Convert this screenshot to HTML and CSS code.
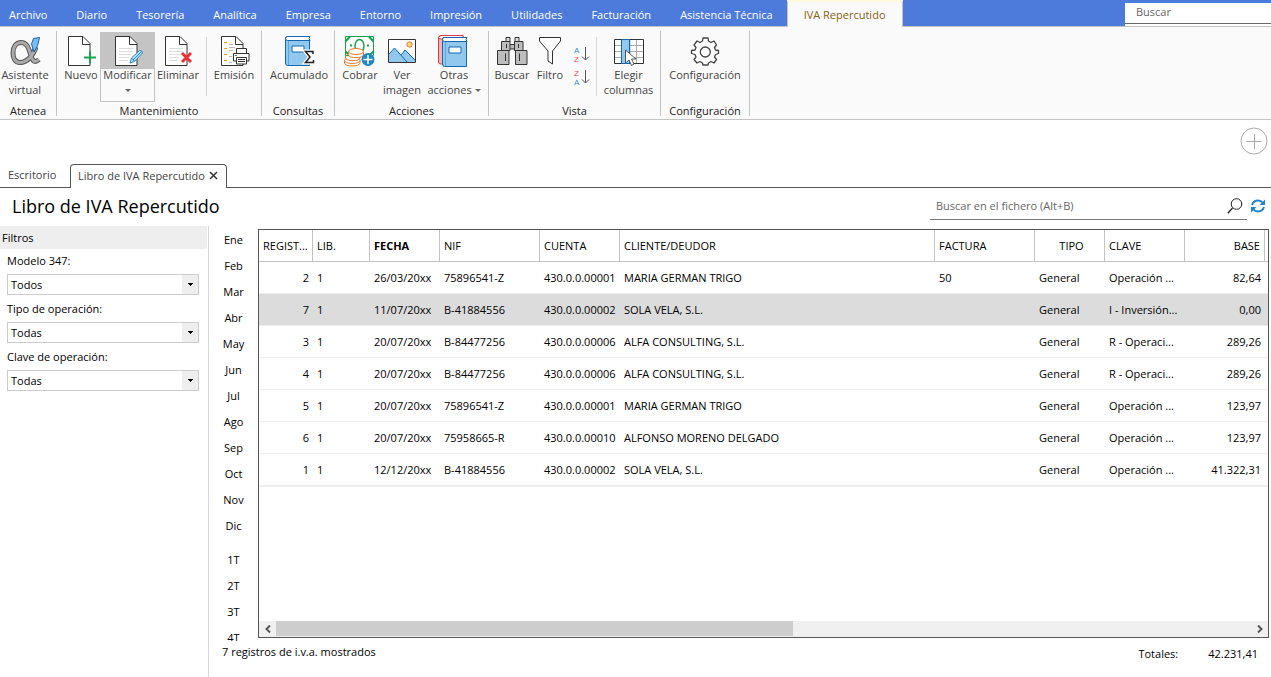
FILE: index.html
```html
<!DOCTYPE html>
<html lang="es">
<head>
<meta charset="utf-8">
<meta name="viewport" content="width=device-width, initial-scale=1">
<title>Libro de IVA Repercutido</title>
<link rel="stylesheet" href="styles.css">
</head>
<body>
<svg class="defs" aria-hidden="true">
  <symbol id="page" viewBox="0 0 32 32">
    <path d="M3.5.5H18L25 7.5V29.5H3.5Z" fill="#fff" stroke="#333"/>
    <path d="M17.5 1V8.500H25" fill="none" stroke="#333"/>
  </symbol>
  <symbol id="lines" viewBox="0 0 32 32">
    <path d="M7 12.500H21M7 15.500H21M7 18.500H19M7 21.500H17M7 24.500H16" stroke="#ddd"/>
  </symbol>
  <symbol id="book" viewBox="0 0 32 32">
    <path d="M2.500 2Q2.500.5 4.500.5H26.500L25.500 3L26.500 4.500V29.500H4.500Q2.500 29.500 2.500 27Z" fill="#92c8ee" stroke="#1268b3"/>
    <path d="M4.500.5H27L26 2.500L27 4.500H4.500Q2.500 4.500 2.500 2.500T4.500.5Z" fill="#fff" stroke="#1268b3"/>
    <path d="M5.500 5V29" stroke="#5da5dc"/>
    <path d="M9 10H21V16H9Z" fill="#fff" stroke="#1268b3"/>
  </symbol>
</svg>

<header>
  <div class="menubar">
    <nav class="menu">
      <a href="#">Archivo</a><a href="#">Diario</a><a href="#">Tesorería</a><a href="#">Analítica</a><a href="#">Empresa</a><a href="#">Entorno</a><a href="#">Impresión</a><a href="#">Utilidades</a><a href="#">Facturación</a><a href="#">Asistencia Técnica</a><a href="#" class="active" aria-current="page">IVA Repercutido</a>
    </nav>
    <div class="global-search"><input type="search" placeholder="Buscar" aria-label="Buscar"></div>
  </div>

  <div class="ribbon">
    <section class="group g-atenea">
      <div class="tools">
        <button class="tool w50"><svg class="icon" viewBox="0 0 32 32"><path d="M27 11C24 20 18 26.500 11 26.500C6 26.500 4 22 4 17C4 11 7 6.500 12 6.500C18 6.500 19.500 12 21.500 18C23 24 25 28 30 23.500" fill="none" stroke="#555" stroke-width="5"/><path d="M27 11C24 20 18 26.500 11 26.500C6 26.500 4 22 4 17C4 11 7 6.500 12 6.500C18 6.500 19.500 12 21.500 18C23 24 25 28 30 23.500" fill="none" stroke="#aaa" stroke-width="3"/><path d="M24.500 2.500L30.500 1.500Q29.500 10 25 16L22.500 8Z" fill="#79bdf0" stroke="#1268b3"/></svg>Asistente<br>virtual</button>
      </div>
      <h2>Atenea</h2>
    </section>
    <section class="group g-mant">
      <div class="tools">
        <button class="tool w38"><svg class="icon" viewBox="0 0 32 32"><use href="#page"/><path d="M19 21.500H31M25 15.500V27.500" stroke="#16a34c" stroke-width="2"/></svg>Nuevo</button>
        <button class="tool w55 hot"><svg class="icon" viewBox="0 0 32 32"><use href="#page"/><use href="#lines"/><path d="M18 27L19.500 22L27.500 14.500Q30 14 30.500 17L22.500 25.500Z" fill="#bfe0f5" stroke="#2288cc"/><path d="M19.500 22L22.500 25.500M21 24L29 16" stroke="#2288cc"/></svg>Modificar<span class="caret"></span></button>
        <button class="tool w46"><svg class="icon" viewBox="0 0 32 32"><use href="#page"/><use href="#lines"/><path d="M20 17L29 26M29 17L20 26" stroke="#ee3136" stroke-width="3"/></svg>Eliminar</button>
        <span class="divider"></span>
        <button class="tool w50"><svg class="icon" viewBox="0 0 32 32"><use href="#page"/><path d="M6 6.500H9M6 12.500H9M6 18.500H9M6 24.500H9" stroke="#f29a1f"/><path d="M11 8.500H15M11 14.500H15M11 20.500H15M11 26.500H15M11 11.500H17" stroke="#bbb"/><path d="M14 16H32V27H14Z" fill="#fafafa"/><path d="M18.500 17V12.500H28.500V17M18 25H15.500V17.500H31V25H28.500" fill="#fff" stroke="#333"/><path d="M18.500 21.500H28.500V28H18.500ZM20 23.500H27M20 25.500H27" fill="#fff" stroke="#333"/><path d="M17 19.500H19" stroke="#28a"/></svg>Emisión</button>
      </div>
      <h2>Mantenimiento</h2>
    </section>
    <section class="group g-cons">
      <div class="tools">
        <button class="tool w66"><svg class="icon" viewBox="0 0 32 32"><use href="#book"/><path d="M30 18V15.500H22.500L27 21L22.500 26.500H30.500V24" fill="none" stroke="#fafafa" stroke-width="4"/><path d="M30 18V15.500H22.500L27 21L22.500 26.500H30.500V24" fill="none" stroke="#222" stroke-width="1.500"/></svg>Acumulado</button>
      </div>
      <h2>Consultas</h2>
    </section>
    <section class="group g-acc">
      <div class="tools">
        <button class="tool w42"><svg class="icon" viewBox="0 0 32 32"><path d="M1.500.5H29.500V19.500H1.500Z" fill="#fff" stroke="#16a34c"/><path d="M1.500 5.500L6 .5M1.500 15.500L6 19.500M25 .5L29.500 5.500M25 19.500L29.500 15.500" stroke="#16a34c" stroke-width="2"/><path d="M6 9.500H8M23 9.500H25" stroke="#16a34c" stroke-width="2"/><ellipse cx="15.500" cy="10" rx="4.500" ry="6.500" fill="#fff" stroke="#16a34c" stroke-width="1.500"/><g fill="#fff" stroke="#e8792b"><path d="M.5 24V27C.5 31 16 31 16 27V24"/><ellipse cx="8.200" cy="24.500" rx="7.700" ry="3"/><path d="M1.500 20V22C1.500 25.500 16 25.500 16 22V20"/><path d="M4.500 15.500V19C4.500 22.500 19.500 22.500 19.500 19V15.500"/><ellipse cx="12" cy="15.500" rx="7.500" ry="3"/></g><circle cx="24" cy="23.500" r="6.500" fill="#1f86ca"/><path d="M19.500 23.500H28.500M24 19V28" stroke="#fff" stroke-width="1.500"/></svg>Cobrar</button>
        <button class="tool w42"><svg class="icon" viewBox="0 0 32 32"><path d="M2.500 3.500H29.500V26.500H2.500Z" fill="#fff" stroke="#333"/><path d="M3 18L8.500 12L15 19L19 14L29 24V26H3Z" fill="#92c8ee"/><path d="M3 18L8.500 12L21 26M15 19L19 14L29 24" fill="none" stroke="#1268b3"/><circle cx="23.500" cy="8.500" r="2.700" fill="#fbd08b" stroke="#e8792b"/></svg>Ver<br>imagen</button>
        <button class="tool w62"><svg class="icon" viewBox="0 0 32 32"><path d="M.5 2Q.5-.5 3-.5H25V28H3Q.5 28 .5 26Z" fill="#f3b4b6" stroke="#e23a40"/><path d="M3-.5H25V3H3Q.5 3 .5 1.500Z" fill="#fff" stroke="#e23a40"/><use href="#book" x="2" y="1"/></svg>Otras<br><span>acciones <i class="caret inline"></i></span></button>
      </div>
      <h2>Acciones</h2>
    </section>
    <section class="group g-vista">
      <div class="tools">
        <button class="tool w42"><svg class="icon" viewBox="0 0 32 32"><g fill="#bdbdbd" stroke="#333"><path d="M10 1.500H14V6H10ZM19 1.500H23V6H19Z" fill="#ddd"/><path d="M13 8.500H20V13H13Z"/><path d="M5.500 5.500H14V14.500H5.500ZM18.500 5.500H27V14.500H18.500Z"/><path d="M1.500 14.500H13V28.500H1.500ZM19.500 14.500H31V28.500H19.500Z"/></g><path d="M9.500 17.500V25M23.500 17.500V25M10.500 8V12M22.500 8V12" stroke="#333"/></svg>Buscar</button>
        <button class="tool w34"><svg class="icon" viewBox="0 0 32 32"><path d="M5.500 1.500H26.500V5L18.500 15V28L14 25V15L5.500 5Z" fill="#fff" stroke="#333"/></svg>Filtro</button>
        <span class="sorts">
          <button aria-label="Orden ascendente"><svg viewBox="0 0 16 20"><text x="0" y="9" fill="#2f92d4">A</text><text x="0" y="18" fill="#ee4b50">Z</text><path d="M11.500 3V16M8 12.500L11.500 16L15 12.500" fill="none" stroke="#555"/></svg></button>
          <button aria-label="Orden descendente"><svg viewBox="0 0 16 20"><text x="0" y="9" fill="#ee4b50">Z</text><text x="0" y="18" fill="#2f92d4">A</text><path d="M11.500 3V16M8 12.500L11.500 16L15 12.500" fill="none" stroke="#555"/></svg></button>
        </span>
        <span class="divider"></span>
        <button class="tool w55"><svg class="icon" viewBox="0 0 32 32"><path d="M1.500 3.500H30.500V27.500H1.500Z" fill="#fff"/><path d="M2 9.500H30M2 15.500H30M2 21.500H30M17 4V27M23.500 4V27" stroke="#aaa"/><path d="M1.500 3.500H30.500V27.500H1.500Z" fill="none" stroke="#333"/><path d="M8.500 3.500H16.500V27.500H8.500Z" fill="#92c8ee" stroke="#1268b3"/><path d="M12.500 14V27L16 24L18.500 29.500L21 28L18.500 23H23Z" fill="#fff" stroke="#555"/></svg>Elegir<br>columnas</button>
      </div>
      <h2>Vista</h2>
    </section>
    <section class="group g-conf">
      <div class="tools">
        <button class="tool w80"><svg class="icon" viewBox="0 0 32 32"><path d="M13.500 5L14 2H19L19.500 5L22 6.500L25 5L27.500 9L25.500 11.500L26.500 14L29.500 14.500V17.500L26.500 18.500L25.500 21L27.500 23.500L25 27L22 25.500L19.500 27L19 29H14L13.500 27L11 25.500L8 27L5 23.500L7 21L6 18.500L2.500 17.500V14.500L6 14L7 11.500L5 9L8 5L11 6.500Z" fill="#fff" stroke="#444" stroke-width="1.300" stroke-linejoin="round"/><circle cx="16.300" cy="16" r="5" fill="#fff" stroke="#444" stroke-width="1.300"/></svg>Configuración</button>
      </div>
      <h2>Configuración</h2>
    </section>
  </div>
</header>

<div class="quick"><button aria-label="Añadir"><svg viewBox="0 0 28 28"><circle cx="14" cy="14" r="13" fill="#fff" stroke="#aaa"/><path d="M6.500 14.500H21.500M14.500 7V22" stroke="#aaa"/></svg></button></div>

<div class="tabs">
  <a href="#">Escritorio</a>
  <div class="tab-active"><a href="#">Libro de IVA Repercutido</a><button aria-label="Cerrar"><svg viewBox="0 0 9 9"><path d="M1 1L8 8M8 1L1 8" stroke="#333" stroke-width="1.500"/></svg></button></div>
  <span class="tab-rest"></span>
</div>

<div class="titlebar">
  <h1>Libro de IVA Repercutido</h1>
  <div class="file-search"><input type="search" placeholder="Buscar en el fichero (Alt+B)" aria-label="Buscar en el fichero"><button aria-label="Buscar"><svg viewBox="0 0 16 16"><circle cx="9.500" cy="6" r="5.300" fill="none" stroke="#222"/><path d="M5.500 10L.8 15.200" stroke="#222" stroke-width="1.300"/></svg></button></div>
  <button class="refresh" aria-label="Actualizar"><svg viewBox="0 0 16 14"><path d="M2 6Q3.500 1.500 8 1.500Q11 1.500 13 4M14 8Q12.500 12.500 8 12.500Q5 12.500 3 10" fill="none" stroke="#1f86ca" stroke-width="2"/><path d="M15 .5V6H9.500ZM1 13.500V8H6.500Z" fill="#1f86ca"/></svg></button>
</div>

<main>
  <aside>
    <h2>Filtros</h2>
    <form>
      <label for="modelo">Modelo 347:</label>
      <select id="modelo"><option>Todos</option></select>
      <label for="tipo">Tipo de operación:</label>
      <select id="tipo"><option>Todas</option></select>
      <label for="clave">Clave de operación:</label>
      <select id="clave"><option>Todas</option></select>
    </form>
  </aside>

  <div class="content">
    <div class="workspace">
      <nav class="periods">
        <a href="#">Ene</a><a href="#">Feb</a><a href="#">Mar</a><a href="#">Abr</a><a href="#">May</a><a href="#">Jun</a><a href="#">Jul</a><a href="#">Ago</a><a href="#">Sep</a><a href="#">Oct</a><a href="#">Nov</a><a href="#">Dic</a>
        <a href="#" class="quarter">1T</a><a href="#">2T</a><a href="#">3T</a><a href="#">4T</a>
      </nav>
      <div class="grid">
        <div class="rows">
          <table>
            <colgroup><col class="c54"><col class="c57"><col class="c70"><col class="c100"><col class="c80"><col><col class="c100"><col class="c70"><col class="c80"><col class="c80"><col class="c3"></colgroup>
            <thead><tr><th>REGIST...</th><th>LIB.</th><th class="sorted">FECHA</th><th>NIF</th><th>CUENTA</th><th>CLIENTE/DEUDOR</th><th>FACTURA</th><th class="center">TIPO</th><th>CLAVE</th><th class="num">BASE</th><th></th></tr></thead>
            <tbody>
              <tr><td class="num">2</td><td>1</td><td>26/03/20xx</td><td>75896541-Z</td><td>430.0.0.00001</td><td>MARIA GERMAN TRIGO</td><td>50</td><td>General</td><td>Operación ...</td><td class="num">82,64</td><td></td></tr>
              <tr class="selected"><td class="num">7</td><td>1</td><td>11/07/20xx</td><td>B-41884556</td><td>430.0.0.00002</td><td>SOLA VELA, S.L.</td><td></td><td>General</td><td>I - Inversión...</td><td class="num">0,00</td><td></td></tr>
              <tr><td class="num">3</td><td>1</td><td>20/07/20xx</td><td>B-84477256</td><td>430.0.0.00006</td><td>ALFA CONSULTING, S.L.</td><td></td><td>General</td><td>R - Operaci...</td><td class="num">289,26</td><td></td></tr>
              <tr><td class="num">4</td><td>1</td><td>20/07/20xx</td><td>B-84477256</td><td>430.0.0.00006</td><td>ALFA CONSULTING, S.L.</td><td></td><td>General</td><td>R - Operaci...</td><td class="num">289,26</td><td></td></tr>
              <tr><td class="num">5</td><td>1</td><td>20/07/20xx</td><td>75896541-Z</td><td>430.0.0.00001</td><td>MARIA GERMAN TRIGO</td><td></td><td>General</td><td>Operación ...</td><td class="num">123,97</td><td></td></tr>
              <tr><td class="num">6</td><td>1</td><td>20/07/20xx</td><td>75958665-R</td><td>430.0.0.00010</td><td>ALFONSO MORENO DELGADO</td><td></td><td>General</td><td>Operación ...</td><td class="num">123,97</td><td></td></tr>
              <tr><td class="num">1</td><td>1</td><td>12/12/20xx</td><td>B-41884556</td><td>430.0.0.00002</td><td>SOLA VELA, S.L.</td><td></td><td>General</td><td>Operación ...</td><td class="num">41.322,31</td><td></td></tr>
            </tbody>
          </table>
        </div>
        <div class="scrollbar">
          <button aria-label="Desplazar a la izquierda"><svg viewBox="0 0 8 8"><path d="M6 .5L2.500 4L6 7.500" fill="none" stroke="#555" stroke-width="2"/></svg></button>
          <div class="track"><div class="thumb"></div></div>
          <button aria-label="Desplazar a la derecha"><svg viewBox="0 0 8 8"><path d="M2 .5L5.500 4L2 7.500" fill="none" stroke="#555" stroke-width="2"/></svg></button>
        </div>
      </div>
    </div>
    <footer><span>7 registros de i.v.a. mostrados</span><span class="totals"><span>Totales:</span><span>42.231,41</span></span></footer>
  </div>
</main>
</body>
</html>
```
FILE: styles.css
```css
* { box-sizing: border-box; }
body {
  margin: 0;
  height: 100vh;
  display: flex;
  flex-direction: column;
  overflow: hidden;
  background: #fff;
  color: #000;
  font: 11px/15px "Open Sans", "Noto Sans", sans-serif;
}
a { color: inherit; text-decoration: none; white-space: nowrap; }
button, input, select { font: inherit; color: inherit; border: 0; background: none; padding: 0; margin: 0; border-radius: 0; }
h1, h2 { margin: 0; font-weight: 400; font-size: 11px; }
svg { display: block; }
.defs { display: none; }

.menubar { display: flex; height: 27px; background: #4d7bdb; border-bottom: 1px solid #c4c4c4; }
.menu { display: flex; color: #fff; padding-left: 9px; gap: 29px; line-height: 30px; height: 27px; }
.menu .active {
  margin-left: -15px;
  padding: 0 16px;
  line-height: 26px;
  color: #856316;
  background: #fafafa;
  border: 1px solid #c4c4c4;
  border-top: 2px solid #fdf9dc;
  border-bottom: 0;
}
.global-search { width: 146px; margin: 3px 0 0 auto; background: #fff; }
.global-search input { width: 100%; height: 21px; padding: 0 11px 3px; border-bottom: 1px solid #666; }
input::placeholder { color: #666; opacity: 1; }

.ribbon { display: flex; height: 93px; background: #fafafa; border-bottom: 1px solid #c4c4c4; padding: 4px 0; }
.group { display: flex; flex-direction: column; justify-content: space-between; border-right: 1px solid #c4c4c4; height: 85px; flex: none; }
.group h2 { text-align: center; height: 13px; color: #222; }
.tools { display: flex; padding-top: 1px; }
.tool { display: flex; flex-direction: column; align-items: center; height: 70px; padding-top: 3px; color: #444; text-align: center; white-space: nowrap; border: 1px solid transparent; }
.icon { width: 32px; height: 32px; margin-bottom: -1px; flex: none; overflow: visible; }
.hot { border-color: #c4c4c4; background: linear-gradient(#c4c4c4 36px, #fafafa 36px); }
.caret { border: 3px solid transparent; border-top-color: #666; border-bottom: 0; margin-top: 7px; }
.caret.inline { display: inline-block; margin: 0 0 2px; }
.divider { width: 1px; height: 59px; margin-top: 5px; background: #d8d8d8; }
.g-atenea { width: 57px; } .g-mant { width: 205px; } .g-cons { width: 73px; }
.g-acc { width: 154px; } .g-vista { width: 172px; } .g-conf { width: 89px; }
.g-mant .tools { padding-left: 5px; }
.g-mant .divider { margin-left: 5px; margin-right: 2px; }
.g-cons .tools, .g-acc .tools, .g-conf .tools { padding-left: 4px; }
.g-vista .tools { padding-left: 2px; }
.w34 { width: 34px; } .w38 { width: 38px; } .w42 { width: 42px; } .w46 { width: 46px; }
.w50 { width: 50px; } .w55 { width: 55px; } .w62 { width: 62px; } .w66 { width: 66px; } .w80 { width: 80px; }
.sorts { display: flex; flex-direction: column; gap: 3px; padding: 12px 6px 0 7px; }
.sorts svg { width: 16px; height: 20px; overflow: visible; }
.sorts text { font: 8px "Liberation Sans", sans-serif; }
.g-vista .divider { margin-right: 4px; }

.quick { display: flex; justify-content: flex-end; padding: 7px 3px 9px; }
.quick svg { width: 28px; height: 28px; }

.tabs { display: flex; height: 24px; color: #444; line-height: 22px; flex: none; }
.tabs > a { width: 70px; padding-left: 8px; border-bottom: 1px solid #555; }
.tab-active { display: flex; align-items: center; gap: 4px; padding: 0 8px 2px 7px; border: 1px solid #555; border-bottom: 0; border-radius: 4px 4px 0 0; }
.tab-active svg { width: 9px; height: 9px; }
.tab-rest { flex: 1; border-bottom: 1px solid #555; }

.titlebar { display: flex; align-items: center; height: 38px; padding: 0 5px 2px 12px; flex: none; }
h1 { font-size: 18px; line-height: 24px; flex: 1; }
.file-search { display: flex; align-items: center; width: 317px; height: 28px; padding: 0 4px 0 6px; border-bottom: 1px solid #777; }
.file-search input { flex: 1; }
.file-search svg { width: 16px; height: 16px; }
.refresh { margin-left: 3px; }
.refresh svg { width: 16px; height: 14px; }

main { display: flex; flex: 1; min-height: 0; }
aside { width: 209px; border-right: 1px solid #d8d8d8; flex: none; }
aside h2 { width: 207px; height: 23px; padding-left: 2px; line-height: 24px; background: #eee; }
form { display: flex; flex-direction: column; padding: 4px 9px 0 7px; }
label { line-height: 16px; margin-bottom: 5px; }
select {
  appearance: none;
  height: 21px;
  padding-left: 3px;
  margin-bottom: 6px;
  border: 1px solid #ccc;
  background: conic-gradient(from -45deg at 50% 100%, #000 90deg, transparent 0) right 4px center / 7px 3px no-repeat, linear-gradient(#eee, #eee) right / 16px 100% no-repeat;
}

.content { display: flex; flex-direction: column; flex: 1; min-width: 0; padding: 3px 2px 0 0; }
.workspace { display: flex; flex: 1; min-height: 0; }
.periods { display: flex; flex-direction: column; width: 49px; text-align: center; line-height: 26px; margin: -2px 0 -3px; overflow: hidden; }
.periods a { height: 26px; flex: none; }
.periods .quarter { margin-top: 8px; }
.grid { display: flex; flex-direction: column; flex: 1; min-width: 0; border: 1px solid #555; }
.rows { flex: 1; overflow: hidden; }
table { width: 100%; table-layout: fixed; border-collapse: separate; border-spacing: 0; border-bottom: 1px solid #eee; }
th, td { height: 32px; padding: 0 0 0 4px; text-align: left; white-space: nowrap; overflow: hidden; }
th:last-child, td:last-child { padding: 0; }
th { font-weight: 400; border-right: 1px solid #c4c4c4; border-bottom: 1px solid #c4c4c4; }
th:last-child { border-right: 0; }
th.sorted { font-weight: 700; }
td { border-bottom: 1px solid #eee; }
.num { text-align: right; padding-right: 4px; }
.center { text-align: center; }
.selected { background: #dcdcdc; }
.c3 { width: 3px; } .c54 { width: 54px; } .c57 { width: 57px; } .c70 { width: 70px; } .c80 { width: 80px; } .c100 { width: 100px; }

.scrollbar { display: flex; height: 16px; background: #f0f0f0; }
.scrollbar button { width: 17px; display: grid; place-items: center; }
.scrollbar svg { width: 8px; height: 8px; }
.track { flex: 1; }
.thumb { width: 53%; height: 15px; background: #cdcdcd; }

footer { display: flex; justify-content: space-between; height: 39px; padding: 6px 11px 0 13px; flex: none; }
.totals { display: flex; gap: 30px; padding-top: 2px; }
```
